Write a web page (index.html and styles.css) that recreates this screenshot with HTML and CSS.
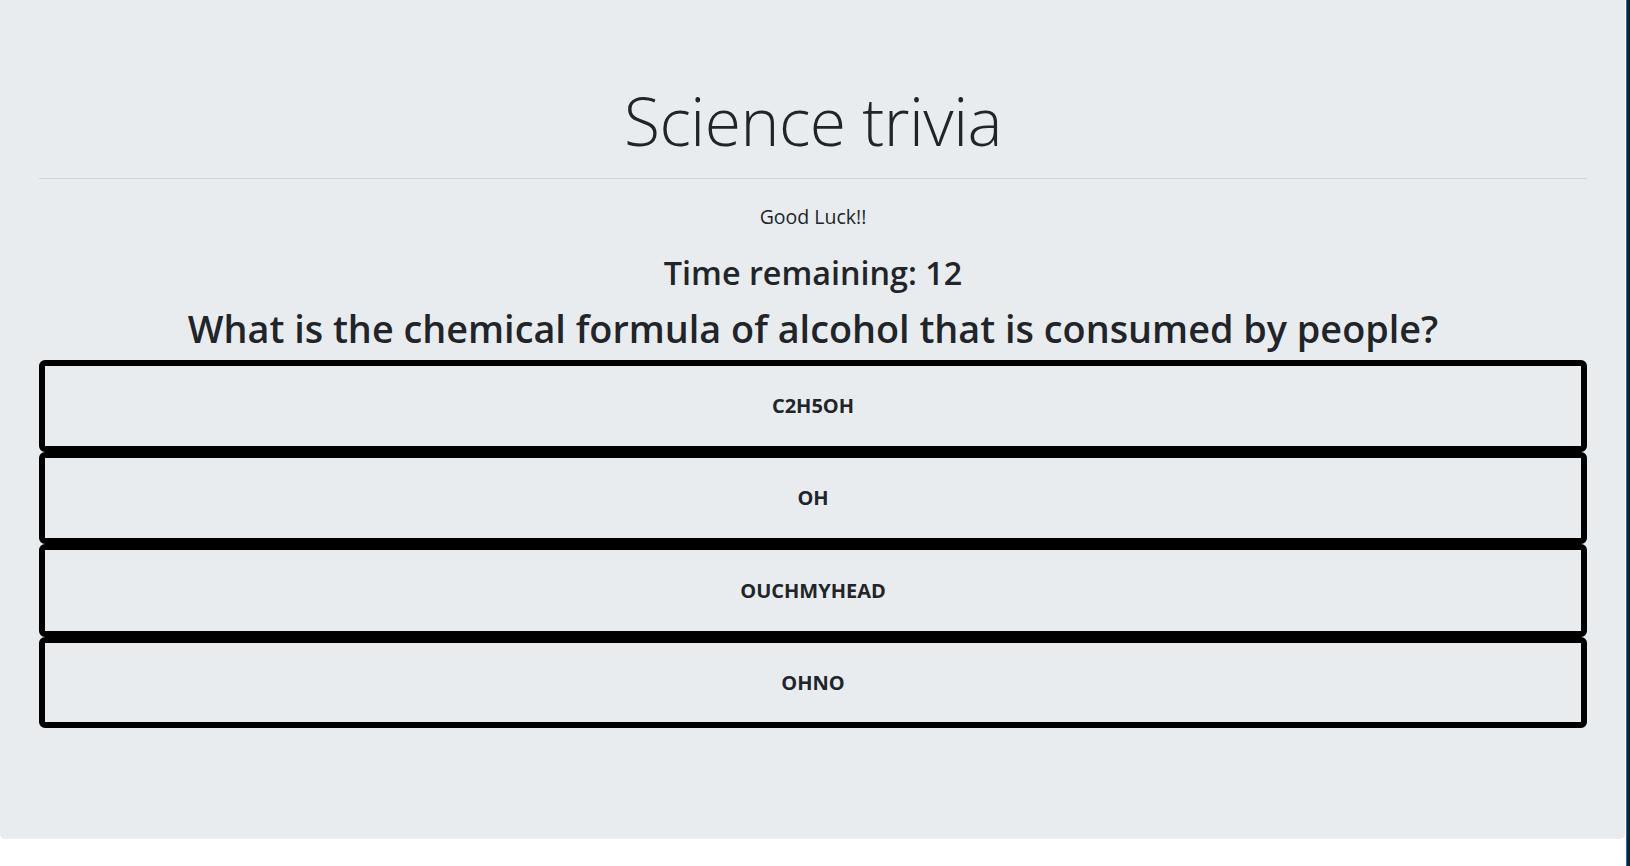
FILE: index.html
```html
<!DOCTYPE html>
<html lang="en">
<head>
<meta charset="utf-8">
<title>Science trivia</title>
<link rel="stylesheet" href="styles.css">
</head>
<body>
<div class="page">
  <main class="main">
    <section class="jumbotron">
      <h1 class="title">Science trivia</h1>
      <hr class="divider">
      <p class="lead">Good Luck!!</p>
      <h2 class="timer">Time remaining: 12</h2>
      <h2 class="question">What is the chemical formula of alcohol that is consumed by people?</h2>
      <div class="answers">
        <button class="answer">C2H5OH</button>
        <button class="answer">OH</button>
        <button class="answer">OUCHMYHEAD</button>
        <button class="answer">OHNO</button>
      </div>
    </section>
  </main>
  <div class="edge"></div>
</div>
</body>
</html>
```

FILE: styles.css
```css
* { box-sizing: border-box; }
html, body { margin: 0; padding: 0; height: 100%; }
body {
  background: #ffffff;
  font-family: "Open Sans", "Noto Sans", sans-serif;
  color: #212529;
}
.page {
  display: flex;
  height: 866px;
}
.main {
  width: 1626px;
  background: #ffffff;
}
.jumbotron {
  width: 1625px;
  height: 839px;
  background: #e9ecef;
  border-radius: 0 0 5px 5px;
  padding: 81px 38px 0 39px;
  text-align: center;
}
.title {
  margin: 0;
  font-size: 66px;
  font-weight: 300;
  line-height: 1.2;
  letter-spacing: -0.5px;
}
.divider {
  margin: 18px 0 0 0;
  border: 0;
  border-top: 1px solid #d0d3d6;
}
.lead {
  margin: 23px 0 0 0;
  font-size: 19.5px;
  line-height: 1.5;
}
.timer {
  margin: 22px 0 0 0;
  font-size: 32.3px;
  font-weight: 600;
  line-height: 1.2;
}
.question {
  margin: 14px 0 0 0;
  font-size: 37.8px;
  font-weight: 600;
  line-height: 1.2;
}
.answers {
  display: flex;
  flex-direction: column;
  margin-top: 8px;
}
.answer {
  height: 92px;
  margin: 0;
  border: 6px solid #000;
  border-radius: 6px;
  background: transparent;
  font-family: "Open Sans", "Noto Sans", sans-serif;
  font-size: 20px;
  font-weight: 700;
  color: #212529;
}
.answer:nth-child(3) { height: 93px; }
.answer:nth-child(4) { height: 91px; }
.edge {
  width: 4px;
  height: 866px;
  background: #1e1e1e;
  border-left: 1px solid #0078d4;
}
```
